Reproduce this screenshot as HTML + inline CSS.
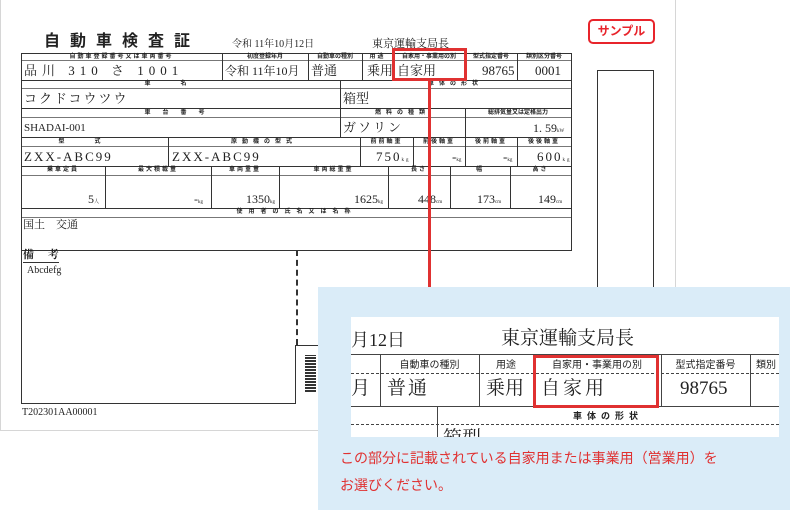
<!DOCTYPE html>
<html><head><meta charset="utf-8"><style>
*{margin:0;padding:0;box-sizing:border-box}
body{width:790px;height:510px;position:relative;background:#fff;overflow:hidden;font-family:"Liberation Serif","Noto Serif CJK SC",serif;color:#222}
.a{position:absolute}
.h{position:absolute;height:1px;background:#333}
.v{position:absolute;width:1px;background:#333}
.l{position:absolute;font-size:6px;font-weight:bold;text-align:center;letter-spacing:2px;font-family:"Liberation Sans","Noto Sans CJK JP",sans-serif;color:#222;line-height:7px}
.t{position:absolute;font-size:13px;line-height:16px;white-space:nowrap}
.u{font-size:5px}
</style></head><body>
<div class="a" style="left:0;top:0;width:676px;height:431px;border:1px solid #d6d6d6;border-top:none"></div>
<div class="a" style="left:44px;top:33px;font-size:16px;line-height:17px;font-weight:bold;letter-spacing:10px;font-family:'Liberation Sans','Noto Sans CJK JP',sans-serif">自動車検査証</div>
<div class="t" style="left:232px;top:37px;font-size:10px">令和 11年10月12日</div>
<div class="t" style="left:372px;top:36px;font-size:11px">東京運輸支局長</div>
<!-- borders -->
<div class="h" style="left:21px;top:53px;width:551px"></div>
<div class="h" style="left:21px;top:60px;width:551px;background:#777"></div>
<div class="h" style="left:21px;top:80px;width:551px"></div>
<div class="h" style="left:21px;top:88px;width:551px;background:#777"></div>
<div class="h" style="left:21px;top:108px;width:551px"></div>
<div class="h" style="left:21px;top:117px;width:551px;background:#777"></div>
<div class="h" style="left:21px;top:137px;width:551px"></div>
<div class="h" style="left:21px;top:146px;width:551px;background:#777"></div>
<div class="h" style="left:21px;top:166px;width:551px"></div>
<div class="h" style="left:21px;top:175px;width:551px;background:#777"></div>
<div class="h" style="left:21px;top:208px;width:551px"></div>
<div class="h" style="left:21px;top:217px;width:551px;background:#777"></div>
<div class="h" style="left:21px;top:250px;width:551px"></div>
<div class="v" style="left:21px;top:53px;height:351px"></div>
<div class="v" style="left:571px;top:53px;height:198px"></div>
<div class="h" style="left:21px;top:403px;width:275px"></div>
<div class="v" style="left:295px;top:345px;height:59px"></div>
<div class="a" style="left:296px;top:250px;height:95px;border-left:2px dashed #333"></div>
<div class="h" style="left:296px;top:345px;width:24px"></div>
<!-- verticals -->
<div class="v" style="left:222px;top:53px;height:27px"></div>
<div class="v" style="left:308px;top:53px;height:27px"></div>
<div class="v" style="left:362px;top:53px;height:27px"></div>
<div class="v" style="left:393px;top:53px;height:27px"></div>
<div class="v" style="left:465px;top:53px;height:27px"></div>
<div class="v" style="left:517px;top:53px;height:27px"></div>
<div class="v" style="left:340px;top:80px;height:57px"></div>
<div class="v" style="left:465px;top:108px;height:29px"></div>
<div class="v" style="left:168px;top:137px;height:29px"></div>
<div class="v" style="left:360px;top:137px;height:29px"></div>
<div class="v" style="left:413px;top:137px;height:29px"></div>
<div class="v" style="left:465px;top:137px;height:29px"></div>
<div class="v" style="left:517px;top:137px;height:29px"></div>
<div class="v" style="left:105px;top:166px;height:42px"></div>
<div class="v" style="left:211px;top:166px;height:42px"></div>
<div class="v" style="left:279px;top:166px;height:42px"></div>
<div class="v" style="left:388px;top:166px;height:42px"></div>
<div class="v" style="left:450px;top:166px;height:42px"></div>
<div class="v" style="left:510px;top:166px;height:42px"></div>
<!-- labels -->
<div class="l" style="left:21px;top:54px;width:201px">自動車登録番号又は車両番号</div>
<div class="l" style="left:222px;top:54px;width:86px;letter-spacing:0">初度登録年月</div>
<div class="l" style="left:308px;top:54px;width:54px;letter-spacing:0">自動車の種別</div>
<div class="l" style="left:362px;top:54px;width:31px">用途</div>
<div class="l" style="left:393px;top:54px;width:72px;letter-spacing:0">自家用・事業用の別</div>
<div class="l" style="left:465px;top:54px;width:52px;letter-spacing:0">型式指定番号</div>
<div class="l" style="left:517px;top:54px;width:54px;letter-spacing:0">類別区分番号</div>
<div class="l" style="left:21px;top:81px;width:319px;letter-spacing:30px">車名</div>
<div class="l" style="left:340px;top:81px;width:231px;letter-spacing:5px">車体の形状</div>
<div class="l" style="left:21px;top:110px;width:319px;letter-spacing:12px">車台番号</div>
<div class="l" style="left:340px;top:110px;width:125px;letter-spacing:5px">燃料の種類</div>
<div class="l" style="left:465px;top:110px;width:106px;letter-spacing:0">総排気量又は定格出力</div>
<div class="l" style="left:21px;top:139px;width:147px;letter-spacing:30px">型式</div>
<div class="l" style="left:168px;top:139px;width:192px;letter-spacing:5px">原動機の型式</div>
<div class="l" style="left:360px;top:139px;width:53px">前前軸重</div>
<div class="l" style="left:413px;top:139px;width:52px">前後軸重</div>
<div class="l" style="left:465px;top:139px;width:52px">後前軸重</div>
<div class="l" style="left:517px;top:139px;width:54px">後後軸重</div>
<div class="l" style="left:21px;top:167px;width:84px">乗車定員</div>
<div class="l" style="left:105px;top:167px;width:106px">最大積載量</div>
<div class="l" style="left:211px;top:167px;width:68px">車両重量</div>
<div class="l" style="left:279px;top:167px;width:109px">車両総重量</div>
<div class="l" style="left:388px;top:167px;width:62px">長さ</div>
<div class="l" style="left:450px;top:167px;width:60px">幅</div>
<div class="l" style="left:510px;top:167px;width:61px">高さ</div>
<div class="l" style="left:21px;top:209px;width:551px;letter-spacing:6px">使用者の氏名又は名称</div>
<!-- values -->
<div class="t" style="left:24px;top:63px;letter-spacing:5px">品川 310 さ 1001</div>
<div class="t" style="left:225px;top:63px;font-size:12px">令和 11年10月</div>
<div class="t" style="left:311px;top:63px">普通</div>
<div class="t" style="left:367px;top:63px">乗用</div>
<div class="t" style="left:397px;top:63px">自家用</div>
<div class="t" style="left:482px;top:63px">98765</div>
<div class="t" style="left:535px;top:63px">0001</div>
<div class="t" style="left:24px;top:91px;letter-spacing:2px">コクドコウツウ</div>
<div class="t" style="left:343px;top:91px">箱型</div>
<div class="t" style="left:24px;top:120px;font-size:11px">SHADAI-001</div>
<div class="t" style="left:343px;top:120px;letter-spacing:2px">ガソリン</div>
<div class="t" style="left:533px;top:120px;font-size:12px">1. 59<span class="u">kW</span></div>
<div class="t" style="left:24px;top:149px;letter-spacing:2px">ZXX-ABC99</div>
<div class="t" style="left:172px;top:149px;letter-spacing:2px">ZXX-ABC99</div>
<div class="t" style="left:376px;top:149px;letter-spacing:2px">750<span class="u">kg</span></div>
<div class="t" style="left:452px;top:149px">-<span class="u">kg</span></div>
<div class="t" style="left:503px;top:149px">-<span class="u">kg</span></div>
<div class="t" style="left:537px;top:149px;letter-spacing:2px">600<span class="u">kg</span></div>
<div class="t" style="left:88px;top:191px;font-size:12px">5<span class="u">人</span></div>
<div class="t" style="left:194px;top:191px;font-size:12px">-<span class="u">kg</span></div>
<div class="t" style="left:246px;top:191px;font-size:12px">1350<span class="u">kg</span></div>
<div class="t" style="left:354px;top:191px;font-size:12px">1625<span class="u">kg</span></div>
<div class="t" style="left:418px;top:191px;font-size:12px">448<span class="u">cm</span></div>
<div class="t" style="left:477px;top:191px;font-size:12px">173<span class="u">cm</span></div>
<div class="t" style="left:538px;top:191px;font-size:12px">149<span class="u">cm</span></div>
<div class="t" style="left:23px;top:217px;font-size:11px">国土　交通</div>
<div class="t" style="left:23px;top:249px;font-size:11px;font-weight:bold;border-bottom:1px solid #333;line-height:13px">備　 考</div>
<div class="t" style="left:27px;top:263px;font-size:10px">Abcdefg</div>
<div class="t" style="left:22px;top:405px;font-size:10px">T202301AA00001</div>
<div class="a" style="left:305px;top:355px;width:11px;height:37px;background:repeating-linear-gradient(0deg,#333 0 2px,#fff 2px 3px)"></div>
<!-- right box -->
<div class="a" style="left:597px;top:70px;width:57px;height:230px;border:1.5px solid #333"></div>
<div class="a" style="left:588px;top:19px;width:67px;height:25px;border:2px solid #e8242b;border-radius:5px;color:#e8242b;font-size:12px;font-weight:bold;text-align:center;line-height:21px;font-family:'Liberation Sans','Noto Sans CJK JP',sans-serif">サンプル</div>
<!-- red highlight -->
<div class="a" style="left:392px;top:48px;width:75px;height:33px;border:3px solid #e03131"></div>
<div class="a" style="left:428px;top:81px;width:3px;height:206px;background:#e03131"></div>
<!-- blue callout -->
<div class="a" style="left:318px;top:287px;width:472px;height:223px;background:#daecf8"></div>
<div class="a" style="left:351px;top:317px;width:428px;height:120px;background:#fff;overflow:hidden">
 <div class="t" style="left:0;top:12px;font-size:18px;line-height:22px">月12日</div>
 <div class="t" style="left:150px;top:10px;font-size:19px;line-height:24px">東京運輸支局長</div>
 <div class="h" style="left:0;top:37px;width:428px;background:#444"></div>
 <div class="a" style="left:0;top:56px;width:428px;border-top:1px dashed #444"></div>
 <div class="h" style="left:0;top:89px;width:428px;background:#444"></div>
 <div class="v" style="left:29px;top:37px;height:52px;background:#444"></div>
 <div class="v" style="left:128px;top:37px;height:52px;background:#444"></div>
 <div class="v" style="left:182px;top:37px;height:52px;background:#444"></div>
 <div class="v" style="left:310px;top:37px;height:52px;background:#444"></div>
 <div class="v" style="left:399px;top:37px;height:52px;background:#444"></div>
 <div class="v" style="left:86px;top:89px;height:40px;background:#444"></div>
 <div class="a" style="left:0;top:107px;width:428px;border-top:1px dashed #444"></div>
 <div class="a" style="left:29px;top:39px;width:99px;text-align:center;font-size:10px;font-family:'Liberation Sans','Noto Sans CJK JP',sans-serif">自動車の種別</div>
 <div class="a" style="left:128px;top:39px;width:54px;text-align:center;font-size:10px;font-family:'Liberation Sans','Noto Sans CJK JP',sans-serif">用途</div>
 <div class="a" style="left:182px;top:39px;width:128px;text-align:center;font-size:10px;font-family:'Liberation Sans','Noto Sans CJK JP',sans-serif">自家用・事業用の別</div>
 <div class="a" style="left:310px;top:39px;width:89px;text-align:center;font-size:10px;font-family:'Liberation Sans','Noto Sans CJK JP',sans-serif">型式指定番号</div>
 <div class="a" style="left:405px;top:39px;font-size:10px;font-family:'Liberation Sans','Noto Sans CJK JP',sans-serif">類別</div>
 <div class="t" style="left:0;top:60px;font-size:19px;line-height:24px">月</div>
 <div class="t" style="left:36px;top:60px;font-size:19px;line-height:24px;letter-spacing:2px">普通</div>
 <div class="t" style="left:135px;top:60px;font-size:19px;line-height:24px">乗用</div>
 <div class="t" style="left:190px;top:60px;font-size:19px;line-height:24px;letter-spacing:3px">自家用</div>
 <div class="t" style="left:329px;top:60px;font-size:19px;line-height:24px">98765</div>
 <div class="a" style="left:86px;top:92px;width:342px;text-align:center;font-size:9px;font-weight:bold;letter-spacing:5px;font-family:'Liberation Sans','Noto Sans CJK JP',sans-serif">車体の形状</div>
 <div class="t" style="left:92px;top:110px;font-size:19px;line-height:24px">箱型</div>
</div>
<div class="a" style="left:533px;top:355px;width:126px;height:53px;border:3px solid #e03131"></div>
<div class="a" style="left:340px;top:445px;font-size:14px;line-height:27px;color:#e03131;font-family:'Liberation Sans','Noto Sans CJK JP',sans-serif">この部分に記載されている自家用または事業用（営業用）を<br>お選びください。</div>
</body></html>
